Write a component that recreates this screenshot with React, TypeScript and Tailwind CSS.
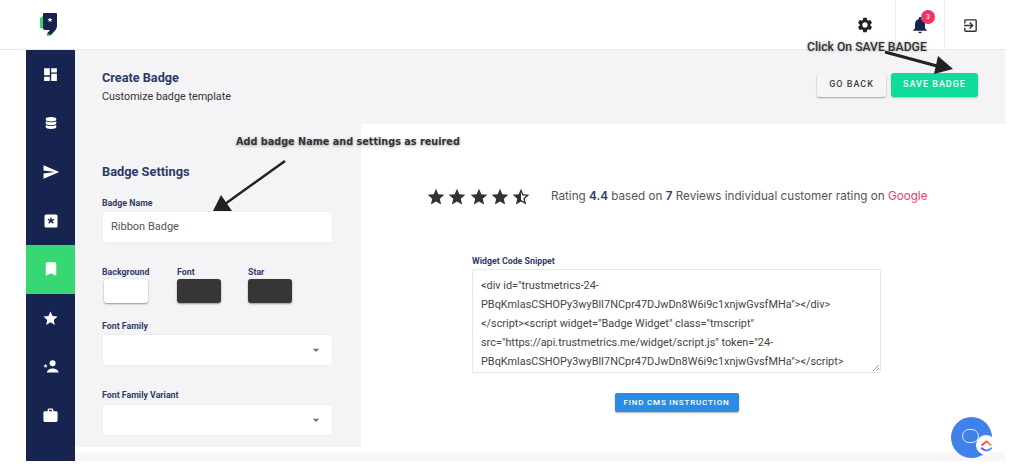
import { FaDatabase } from "react-icons/fa";
import {
  MdArrowDropDown,
  MdBookmark,
  MdDashboard,
  MdNotifications,
  MdOutlineExitToApp,
  MdSend,
  MdSettings,
  MdStar,
  MdStarHalf,
  MdWork,
} from "react-icons/md";

const font = "font-['Roboto','Liberation_Sans',sans-serif]";

function StarBox({ className }: { className?: string }) {
  return (
    <svg viewBox="0 0 14 14" className={className}>
      <rect x="0.5" y="0.5" width="13" height="13" rx="1.5" fill="#fff" />
      <path d="M6.3 3.5h1.4v2.3l2.1-1 .6 1.2-2.1 1 1.5 1.8-1 .9L7 8l-1.8 1.7-1-.9 1.5-1.8-2.1-1 .6-1.2 2.1 1z" fill="#16244f" />
    </svg>
  );
}

function PersonStar({ className }: { className?: string }) {
  return (
    <svg viewBox="0 0 16 13" className={className} fill="#fff">
      <circle cx="9.6" cy="3.3" r="3" />
      <path d="M4 12.4c0-2.6 3.4-4 5.6-4s5.9 1.4 5.9 4z" />
      <path d="M2.6 3.8l.6 1.4 1.5.1-1.1 1 .3 1.5-1.3-.8-1.3.8.3-1.5-1.1-1 1.5-.1z" />
    </svg>
  );
}

const navItems = [
  { icon: <MdDashboard className="size-[17px] text-white" /> },
  { icon: <FaDatabase className="size-[12px] text-white" /> },
  { icon: <MdSend className="size-[18px] text-white" /> },
  { icon: <StarBox className="size-[14px]" /> },
  { icon: <MdBookmark className="size-[18px] text-white" />, active: true },
  { icon: <MdStar className="size-[17px] text-white" /> },
  { icon: <PersonStar className="h-[13px] w-[16px]" /> },
  { icon: <MdWork className="size-[17px] text-white" /> },
];

function Label({ children }: { children: string }) {
  return <div className="text-[8.8px] leading-[10px] font-bold text-[#2f3d6b]">{children}</div>;
}

function SelectBox({ className }: { className?: string }) {
  return (
    <div className={`flex h-[32px] w-[231px] items-center justify-end rounded-[3px] border border-[#eceef1] bg-white pr-[8px] ${className ?? ""}`}>
      <MdArrowDropDown className="size-[16px] text-[#777]" />
    </div>
  );
}

function Swatch({ className }: { className: string }) {
  return <div className={`h-[24px] w-[44px] rounded-[3px] shadow-[0_1px_2px_rgba(0,0,0,0.4)] ${className}`} />;
}

export default function App() {
  return (
    <div className={`relative h-[470px] w-[1024px] overflow-hidden bg-white ${font}`}>
      <header className="flex h-[50px] w-[1005px] items-stretch border-b border-[#e9e9e9]">
        <div className="ml-[40px] flex items-center">
          <svg viewBox="0 0 18 23" className="h-[23px] w-[18px]">
            <path d="M0 5L3 3V15.5H1L0 14.5zM7 20L7 23H10L11 21z" fill="#35d66f" />
            <path d="M3 1Q3 0 4 0H16Q17 0 17 1V13Q17 15 15.5 17L11 22L7 20.5L10 17H5Q3 17 3 15z" fill="#16244f" />
            <path d="M10 4.4l.7 1.6 1.8.1-1.4 1.1.5 1.7L10 8l-1.6 1 .5-1.7-1.4-1.1 1.8-.1z" fill="#fff" />
          </svg>
        </div>
        <div className="ml-auto flex">
          <div className="flex w-[60px] items-center justify-start pl-[21px] pt-[1px]">
            <MdSettings className="size-[18px] text-[#222]" />
          </div>
          <div className="relative flex w-[50px] items-center justify-center border-x border-[#ececec] pt-[1px]">
            <MdNotifications className="size-[20px] text-[#16244f]" />
            <span className="absolute left-[25px] top-[10px] flex size-[14px] items-center justify-center rounded-full bg-[#f5315f] text-[7px] text-white">3</span>
          </div>
          <div className="flex w-[60px] items-center pl-[17px] pt-[1px]">
            <MdOutlineExitToApp className="size-[17px] text-[#333]" />
          </div>
        </div>
      </header>

      <div className="ml-[26px] flex h-[411px] w-[979px]">
        <nav className="flex w-[49px] flex-col bg-[#16244f]">
          {navItems.map((item, i) => (
            <div key={i} className={`flex h-[48.75px] items-center justify-center ${item.active ? "bg-[#37d873]" : ""}`}>
              {item.icon}
            </div>
          ))}
        </nav>

        <main className="flex min-w-0 flex-1 flex-col">
          <section className="flex h-[74px] items-start justify-between bg-[#f4f4f6] pl-[27px] pr-[27px] pt-[20px]">
            <div>
              <h1 className="text-[12.7px] leading-[15px] font-bold text-[#2b3a68]">Create Badge</h1>
              <p className="mt-[5px] text-[10.8px] leading-[14px] text-[#333]">Customize badge template</p>
            </div>
            <div className="mt-[3px] flex gap-[5px]">
              <button className="h-[24px] w-[69px] rounded-[3px] bg-[#f5f5f5] text-[9px] font-medium tracking-[1px] text-[#444] shadow-[0_1px_2px_rgba(0,0,0,0.35)]">GO BACK</button>
              <button className="h-[24px] w-[87px] rounded-[3px] bg-[#0fdc9c] text-[9px] font-medium tracking-[1px] text-white shadow-[0_1px_2px_rgba(0,0,0,0.25)]">SAVE BADGE</button>
            </div>
          </section>

          <div className="flex h-[323px]">
            <section className="w-[286px] bg-[#f4f4f6] pl-[27px] pt-[40px]">
              <h2 className="text-[12.8px] leading-[15px] font-bold text-[#2b3a68]">Badge Settings</h2>
              <div className="mt-[19px]">
                <Label>Badge Name</Label>
              </div>
              <div className="mt-[3px] flex h-[32px] w-[231px] items-center rounded-[3px] border border-[#eceef1] bg-white pl-[8px] text-[11px] text-[#555]">Ribbon Badge</div>
              <div className="mt-[24px] flex">
                <div className="w-[75px]">
                  <Label>Background</Label>
                  <Swatch className="ml-[2px] mt-[2px] bg-white" />
                </div>
                <div className="w-[71px]">
                  <Label>Font</Label>
                  <Swatch className="mt-[2px] bg-[#363636]" />
                </div>
                <div>
                  <Label>Star</Label>
                  <Swatch className="mt-[2px] bg-[#363636]" />
                </div>
              </div>
              <div className="mt-[18px]">
                <Label>Font Family</Label>
              </div>
              <SelectBox className="mt-[3px]" />
              <div className="mt-[24px]">
                <Label>Font Family Variant</Label>
              </div>
              <SelectBox className="mt-[4px]" />
            </section>

            <section className="min-w-0 flex-1 bg-white">
              <div className="ml-[65px] mt-[63px] flex h-[20px] items-center">
                <div className="flex w-[125px] gap-[1.3px] text-[#333]">
                  <MdStar className="size-[20px]" />
                  <MdStar className="size-[20px]" />
                  <MdStar className="size-[20px]" />
                  <MdStar className="size-[20px]" />
                  <MdStarHalf className="size-[20px]" />
                </div>
                <p className="whitespace-nowrap font-['Inter',sans-serif] text-[11.7px] text-[#555]">
                  Rating <b className="font-semibold text-[#2b3a68]">4.4</b> based on <b className="font-semibold text-[#2b3a68]">7</b> Reviews individual customer rating on <span className="text-[#ee3d68]">Google</span>
                </p>
              </div>
              <div className="ml-[111px] mt-[49px] w-[409px]">
                <Label>Widget Code Snippet</Label>
                <div className="relative mt-[3px] h-[104px] overflow-hidden rounded-[2px] border border-[#e8e8e8] pl-[8px] pr-[4px] pt-[6px] text-[10.9px] leading-[19px] text-[#444]">
                  <div className="whitespace-nowrap">&lt;div id="trustmetrics-24-</div>
                  <div className="whitespace-nowrap">PBqKmlasCSHOPy3wyBlI7NCpr47DJwDn8W6i9c1xnjwGvsfMHa"&gt;&lt;/div&gt;</div>
                  <div className="whitespace-nowrap">&lt;/script&gt;&lt;script widget="Badge Widget" class="tmscript"</div>
                  <div className="whitespace-nowrap">src="https://api.trustmetrics.me/widget/script.js" token="24-</div>
                  <div className="whitespace-nowrap">PBqKmlasCSHOPy3wyBlI7NCpr47DJwDn8W6i9c1xnjwGvsfMHa"&gt;&lt;/script&gt;</div>
                  <svg viewBox="0 0 6 6" className="absolute bottom-[1px] right-[1px] size-[6px]">
                    <path d="M6 0L0 6M6 3L3 6" stroke="#888" strokeWidth="0.8" />
                  </svg>
                </div>
                <div className="mt-[20px] flex justify-center">
                  <button className="h-[19px] w-[124px] rounded-[2px] bg-[#2b8ce6] text-[8px] font-medium tracking-[0.8px] text-white shadow-[0_1px_2px_rgba(0,0,0,0.3)]">FIND CMS INSTRUCTION</button>
                </div>
              </div>
            </section>
          </div>

          <div className="mt-[5px] flex-1 bg-[#f8f6f7]" />
        </main>
      </div>

      {/* annotations drawn over the screenshot */}
      <span className="absolute left-[807px] top-[40px] whitespace-nowrap text-[12.2px] leading-[14px] font-medium text-[#333] [text-shadow:0_0_3px_rgba(0,0,0,0.35)]">Click On SAVE BADGE</span>
      <span className="absolute left-[236px] top-[135px] whitespace-nowrap font-['DejaVu_Sans',sans-serif] text-[9.7px] leading-[14px] font-bold text-[#333] [text-shadow:0_1px_3px_rgba(0,0,0,0.35)]">Add badge Name and settings as reuired</span>
      <svg className="pointer-events-none absolute left-0 top-0 h-[470px] w-[1024px]" viewBox="0 0 1024 470">
        <path d="M285 161L225 204" stroke="#222" strokeWidth="2.5" />
        <path d="M213 211L221 195L232 211z" fill="#222" />
        <path d="M885 52L937 66" stroke="#222" strokeWidth="3" />
        <path d="M953 69L938 56L934 74z" fill="#222" />
      </svg>

      <div className="absolute left-[951px] top-[417px] flex size-[41px] items-center justify-center rounded-full bg-[#3f83ea]">
        <div className="mb-[3px] mr-[3px] h-[14px] w-[17px] rounded-full border border-white/80" />
      </div>
      <div className="absolute left-[976px] top-[435px] flex size-[20px] items-center justify-center rounded-full bg-white">
        <svg viewBox="0 0 14 14" className="size-[13px]" fill="none" strokeWidth="2.2" strokeLinecap="round" strokeLinejoin="round">
          <defs>
            <linearGradient id="cu-top" x1="0" x2="1" y1="0" y2="0">
              <stop offset="0" stopColor="#f0368f" />
              <stop offset="1" stopColor="#fba31f" />
            </linearGradient>
            <linearGradient id="cu-bottom" x1="0" x2="1" y1="0" y2="0">
              <stop offset="0" stopColor="#8b3df0" />
              <stop offset="1" stopColor="#3fa6f5" />
            </linearGradient>
          </defs>
          <path d="M2.5 6.5L7 2.5l4.5 4" stroke="url(#cu-top)" />
          <path d="M2 10c3 3 7 3 10 0" stroke="url(#cu-bottom)" />
        </svg>
      </div>
    </div>
  );
}
